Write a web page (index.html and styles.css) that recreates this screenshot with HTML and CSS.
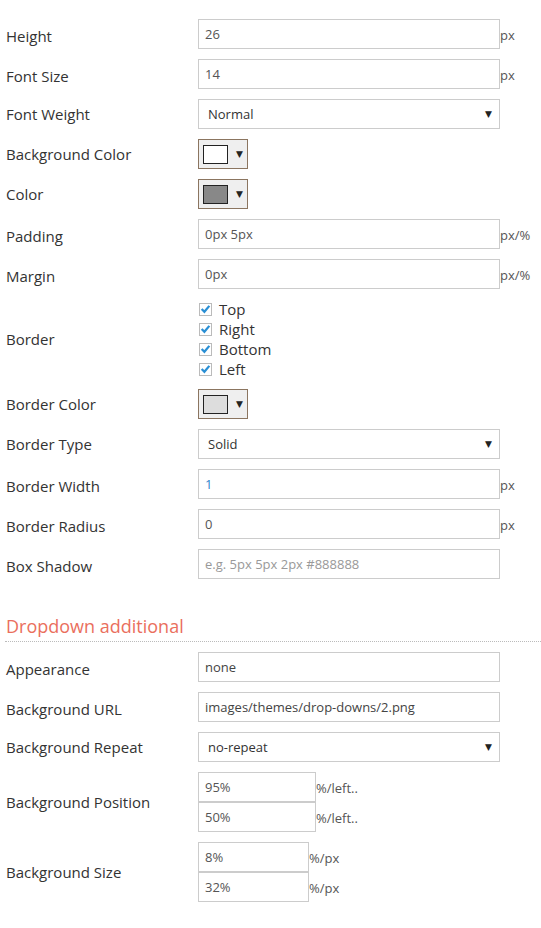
FILE: index.html
```html
<!DOCTYPE html>
<html>
<head>
<meta charset="utf-8">
<link rel="stylesheet" href="styles.css">
</head>
<body>
<div class="form">
  <div class="row txt"><div class="lbl">Height</div><div class="ctl"><div class="inp">26</div><span class="unit">px</span></div></div>
  <div class="row txt"><div class="lbl">Font Size</div><div class="ctl"><div class="inp">14</div><span class="unit">px</span></div></div>
  <div class="row"><div class="lbl">Font Weight</div><div class="ctl"><div class="sel">Normal<span class="arr">▼</span></div></div></div>
  <div class="row"><div class="lbl">Background Color</div><div class="ctl"><div class="swbtn"><span class="sw white"></span><span class="arr">▼</span></div></div></div>
  <div class="row"><div class="lbl">Color</div><div class="ctl"><div class="swbtn"><span class="sw gray"></span><span class="arr">▼</span></div></div></div>
  <div class="row txt"><div class="lbl">Padding</div><div class="ctl"><div class="inp">0px 5px</div><span class="unit">px/%</span></div></div>
  <div class="row txt"><div class="lbl">Margin</div><div class="ctl"><div class="inp">0px</div><span class="unit">px/%</span></div></div>
  <div class="row"><div class="lbl">Border</div>
    <div class="checks">
      <div class="chk"><span class="box"><svg viewBox="0 0 12 12" width="12" height="12"><path d="M1.8 6 L4.8 9 L10.2 2.6" fill="none" stroke="#2a8fd4" stroke-width="2.5"/></svg></span>Top</div>
      <div class="chk"><span class="box"><svg viewBox="0 0 12 12" width="12" height="12"><path d="M1.8 6 L4.8 9 L10.2 2.6" fill="none" stroke="#2a8fd4" stroke-width="2.5"/></svg></span>Right</div>
      <div class="chk"><span class="box"><svg viewBox="0 0 12 12" width="12" height="12"><path d="M1.8 6 L4.8 9 L10.2 2.6" fill="none" stroke="#2a8fd4" stroke-width="2.5"/></svg></span>Bottom</div>
      <div class="chk"><span class="box"><svg viewBox="0 0 12 12" width="12" height="12"><path d="M1.8 6 L4.8 9 L10.2 2.6" fill="none" stroke="#2a8fd4" stroke-width="2.5"/></svg></span>Left</div>
    </div>
  </div>
  <div class="row"><div class="lbl">Border Color</div><div class="ctl"><div class="swbtn"><span class="sw light"></span><span class="arr">▼</span></div></div></div>
  <div class="row"><div class="lbl">Border Type</div><div class="ctl"><div class="sel">Solid<span class="arr">▼</span></div></div></div>
  <div class="row txt"><div class="lbl">Border Width</div><div class="ctl"><div class="inp blue">1</div><span class="unit">px</span></div></div>
  <div class="row txt"><div class="lbl">Border Radius</div><div class="ctl"><div class="inp">0</div><span class="unit">px</span></div></div>
  <div class="row txt"><div class="lbl">Box Shadow</div><div class="ctl"><div class="inp ph">e.g. 5px 5px 2px #888888</div></div></div>

  <div class="heading">Dropdown additional</div>

  <div class="row txt first"><div class="lbl">Appearance</div><div class="ctl"><div class="inp dark">none</div></div></div>
  <div class="row txt"><div class="lbl">Background URL</div><div class="ctl"><div class="inp dark">images/themes/drop-downs/2.png</div></div></div>
  <div class="row"><div class="lbl">Background Repeat</div><div class="ctl"><div class="sel">no-repeat<span class="arr">▼</span></div></div></div>
  <div class="row"><div class="lbl">Background Position</div>
    <div class="stack">
      <div class="ctl"><div class="inp pos">95%</div><span class="unit">%/left..</span></div>
      <div class="ctl"><div class="inp pos">50%</div><span class="unit">%/left..</span></div>
    </div>
  </div>
  <div class="row"><div class="lbl">Background Size</div>
    <div class="stack">
      <div class="ctl"><div class="inp size">8%</div><span class="unit">%/px</span></div>
      <div class="ctl"><div class="inp size">32%</div><span class="unit">%/px</span></div>
    </div>
  </div>
</div>
</body>
</html>
```
FILE: styles.css
```css
* { box-sizing: border-box; }
body {
  margin: 0;
  background: #fff;
  font-family: "Open Sans", "Noto Sans", sans-serif;
  color: #333;
}
.form {
  padding: 9px 0 20px 0;
}
.row {
  display: grid;
  grid-template-columns: 192px 1fr;
  align-items: center;
  margin-top: 10px;
  padding-left: 6px;
}
.lbl {
  font-size: 15px;
  line-height: 20px;
  color: #333;
}
.row.txt .lbl { padding-top: 4px; }
.ctl {
  display: flex;
  align-items: center;
}
.inp {
  width: 302px;
  height: 30px;
  border: 1px solid #ccc;
  padding: 0 6px;
  font-size: 13px;
  line-height: 28px;
  color: #555;
  white-space: nowrap;
}
.inp.dark { color: #444; }
.inp.blue { color: #2f86cc; }
.inp.ph { color: #999; }
.inp.pos { width: 118px; }
.inp.size { width: 111px; }
.unit {
  font-size: 13px;
  color: #555;
  padding-top: 2px;
}
.sel {
  width: 302px;
  height: 30px;
  border: 1px solid #ccc;
  padding: 0 9px;
  font-size: 13px;
  line-height: 28px;
  color: #333;
  display: flex;
  justify-content: space-between;
}
.arr {
  font-size: 9px;
  color: #222;
  font-family: "DejaVu Sans", sans-serif;
}
.sel .arr { margin-right: -2px; }
.swbtn {
  width: 50px;
  height: 30px;
  border: 1px solid #8b7560;
  background: #efefef;
  display: flex;
  align-items: center;
  padding-left: 4px;
  gap: 8px;
}
.sw {
  width: 25px;
  height: 19px;
  border: 1px solid #222;
  display: block;
}
.sw.white { background: #fff; }
.sw.gray { background: #888; }
.sw.light { background: #ddd; }
.checks {
  display: flex;
  flex-direction: column;
}
.chk {
  display: flex;
  align-items: center;
  height: 20px;
  font-size: 15px;
  color: #333;
}
.box {
  width: 13px;
  height: 13px;
  border: 1px solid #bbb;
  background: #fff;
  margin-left: 1px;
  margin-right: 7px;
  display: flex;
  align-items: center;
  justify-content: center;
}
.box svg { display: block; }
.stack {
  display: flex;
  flex-direction: column;
}
.heading {
  margin: 35px 0 0 5px;
  font-size: 18px;
  line-height: 24px;
  color: #ea6f5d;
  padding: 0 0 3px 1px;
  border-bottom: 1px dotted #bbb;
}
.row.first { margin-top: 10px; }
```
